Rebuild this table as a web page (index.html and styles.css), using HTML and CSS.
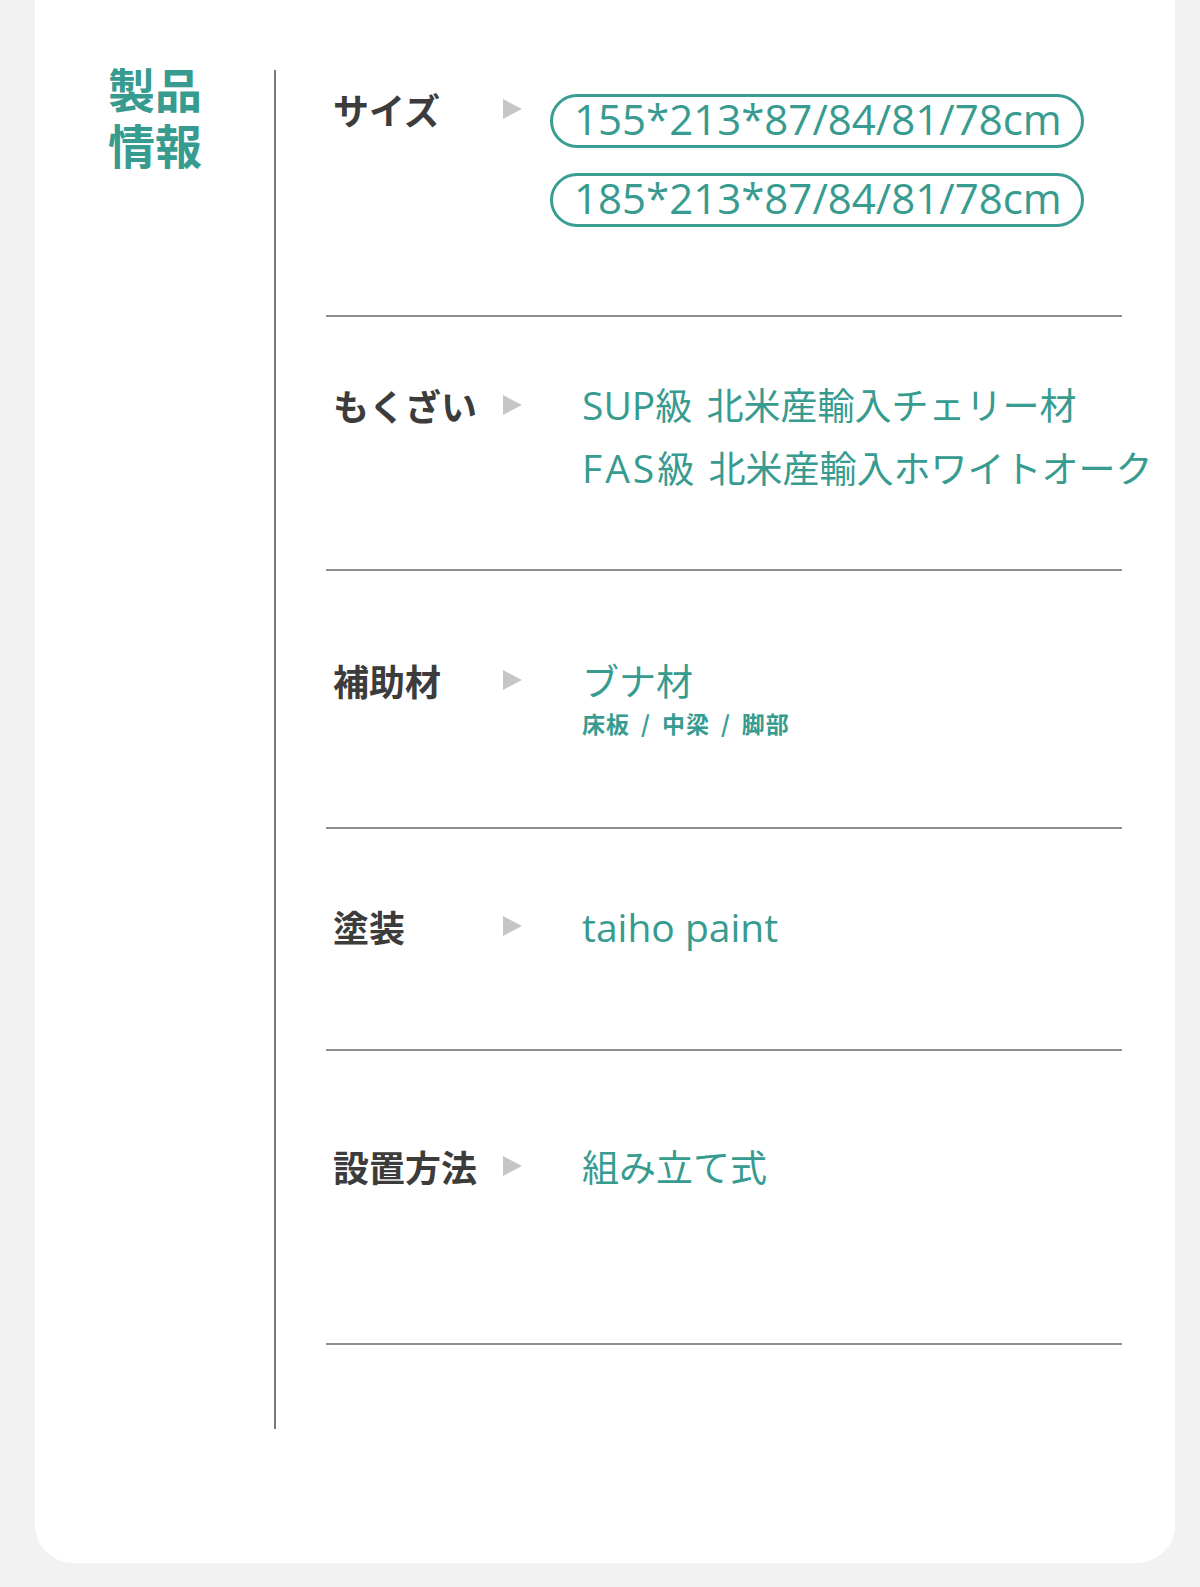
FILE: index.html
```html
<!DOCTYPE html>
<html lang="ja">
<head>
<meta charset="utf-8">
<title>製品情報</title>
<link rel="stylesheet" href="styles.css">
</head>
<body>
<div class="card">
  <aside class="side">
    <h2 class="title"><span class="title-line">製品</span><span class="title-line">情報</span></h2>
  </aside>
  <div class="spec">
    <div class="row row-size">
      <div class="label">サイズ</div>
      <div class="arrow"><i class="tri"></i></div>
      <div class="pills">
        <span class="pill">155*213*87/84/81/78cm</span>
        <span class="pill">185*213*87/84/81/78cm</span>
      </div>
    </div>
    <div class="row row-wood">
      <div class="label">もくざい</div>
      <div class="arrow"><i class="tri"></i></div>
      <div class="value value-multi">
        <div><span class="lat">SUP</span>級 北米産輸入チェリー材</div>
        <div><span class="lat lat-wide">FAS</span>級 北米産輸入ホワイトオーク</div>
      </div>
    </div>
    <div class="row row-aux">
      <div class="label">補助材</div>
      <div class="arrow"><i class="tri"></i></div>
      <div class="value">
        <div>ブナ材</div>
        <div class="sub">床板<span class="sep">/</span>中梁<span class="sep">/</span>脚部</div>
      </div>
    </div>
    <div class="row row-paint">
      <div class="label">塗装</div>
      <div class="arrow"><i class="tri"></i></div>
      <div class="value"><span class="lat">taiho paint</span></div>
    </div>
    <div class="row row-install">
      <div class="label">設置方法</div>
      <div class="arrow"><i class="tri"></i></div>
      <div class="value">組み立て式</div>
    </div>
  </div>
</div>
</body>
</html>
```
FILE: styles.css
```css
html, body {
  margin: 0;
  padding: 0;
}
body {
  background: #f2f2f2;
  font-family: "Noto Sans CJK JP", "Noto Sans", sans-serif;
  width: 1200px;
  height: 1587px;
  overflow: hidden;
}
.card {
  margin-left: 35px;
  width: 1140px;
  height: 1563px;
  box-sizing: border-box;
  background: #ffffff;
  border-radius: 0 0 38px 38px;
  display: flex;
  align-items: flex-start;
  padding-top: 70px;
}
.side {
  width: 239px;
  flex: none;
}
.title {
  margin: -8px 0 0 0;
  padding-left: 73px;
  font-size: 47px;
  font-weight: 700;
  color: #379b8f;
  display: flex;
  flex-direction: column;
}
.title-line {
  display: block;
  height: 52px;
  line-height: 52px;
}
.title-line + .title-line {
  margin-top: 4px;
}
.spec {
  flex: none;
  width: 796px;
  height: 1359px;
  border-left: 2px solid #7b7b7b;
  padding-left: 50px;
}
.row {
  box-sizing: border-box;
  display: grid;
  grid-template-columns: 177px 47px 1fr;
  align-items: start;
  border-bottom: 2px solid #8e8e8e;
}
.row-size { height: 247px; padding-top: 14px; }
.row-wood { height: 254px; padding-top: 63px; }
.row-aux { height: 258px; padding-top: 84px; }
.row-paint { height: 222px; padding-top: 72px; }
.row-install { height: 294px; padding-top: 90px; }

.label {
  padding-left: 7px;
  font-size: 36px;
  line-height: 50px;
  font-weight: 700;
  color: #3c3c3c;
  white-space: nowrap;
}
.arrow {
  height: 50px;
  display: flex;
  align-items: center;
}
.tri {
  display: block;
  width: 0;
  height: 0;
  border-left: 19px solid #c6c6c6;
  border-top: 10.5px solid transparent;
  border-bottom: 10.5px solid transparent;
}
.pills {
  display: flex;
  flex-direction: column;
  align-items: flex-start;
  gap: 25px;
  margin-top: 10px;
}
.pill {
  display: block;
  border: 3px solid #3a9d92;
  border-radius: 30px;
  padding: 0 19px 4px 21px;
  font-family: "Open Sans", "Noto Sans", sans-serif;
  font-size: 42px;
  line-height: 44px;
  color: #379b8f;
  white-space: nowrap;
}
.value {
  padding-left: 32px;
  font-size: 37px;
  line-height: 50px;
  color: #379b8f;
  white-space: nowrap;
}
.value-multi {
  line-height: 63px;
  margin-top: -7px;
  word-spacing: 6px;
}
.lat {
  font-family: "Open Sans", "Noto Sans", sans-serif;
  font-size: 39px;
}
.lat-wide {
  letter-spacing: 3px;
}
.sub {
  margin-top: 3px;
  font-size: 23px;
  line-height: 30px;
  font-weight: 700;
  letter-spacing: 1px;
}
.sep {
  margin: 0 11px;
}
```
